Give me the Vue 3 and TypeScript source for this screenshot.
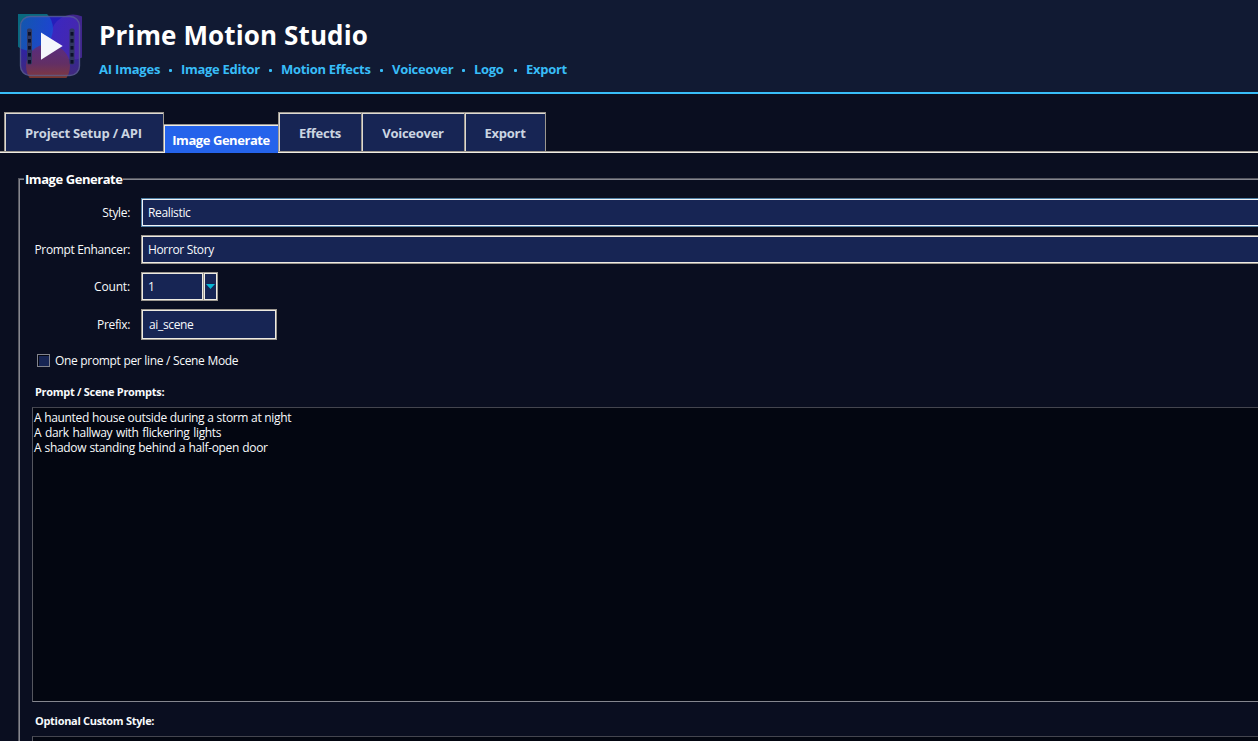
<script setup lang="ts">
import { ref } from 'vue'

const features: { label: string; cls: string }[] = [
  { label: 'AI Images', cls: 'f-images' },
  { label: 'Image Editor', cls: 'f-editor' },
  { label: 'Motion Effects', cls: 'f-motion' },
  { label: 'Voiceover', cls: 'f-voice' },
  { label: 'Logo', cls: 'f-logo' },
  { label: 'Export', cls: 'f-export' },
]
const tabs: { label: string; cls: string }[] = [
  { label: 'Project Setup / API', cls: 't-setup' },
  { label: 'Image Generate', cls: 't-image' },
  { label: 'Effects', cls: 't-effects' },
  { label: 'Voiceover', cls: 't-voice' },
  { label: 'Export', cls: 't-export' },
]
const active = ref('Image Generate')
const prompts: { text: string; cls: string }[] = [
  { text: 'A haunted house outside during a storm at night', cls: 'p1' },
  { text: 'A dark hallway with flickering lights', cls: 'p2' },
  { text: 'A shadow standing behind a half-open door', cls: 'p3' },
]
</script>

<template>
  <div class="app">
    <header class="header">
      <svg class="logo" width="64" height="64" viewBox="18 14 64 64">
        <defs>
          <linearGradient id="base" x1="0" y1="0" x2="0" y2="1">
            <stop offset="0" stop-color="#231cc0" />
            <stop offset="0.45" stop-color="#2a22ac" />
            <stop offset="1" stop-color="#432a78" />
          </linearGradient>
          <linearGradient id="cyan" x1="0" y1="0" x2="1" y2="0.3">
            <stop offset="0.1" stop-color="#0a6c9c" />
            <stop offset="1" stop-color="#1a4fd4" />
          </linearGradient>
          <linearGradient id="orange" x1="0" y1="0" x2="0" y2="1">
            <stop offset="0" stop-color="#5c2c7c" />
            <stop offset="0.45" stop-color="#673060" />
            <stop offset="0.8" stop-color="#8a3c34" />
          </linearGradient>
          <linearGradient id="violet" x1="0" y1="0" x2="1" y2="0.2">
            <stop offset="0" stop-color="#3c28c6" />
            <stop offset="1" stop-color="#5229a0" />
          </linearGradient>
          <clipPath id="card"><rect x="20" y="16" width="60" height="60" rx="10" /></clipPath>
          <clipPath id="frame"><rect x="18" y="14" width="64" height="64" /></clipPath>
        </defs>
        <g clip-path="url(#frame)">
          <circle cx="31" cy="29" r="22" fill="#08687f" />
          <circle cx="73" cy="37" r="22.500" fill="#40268c" />
          <circle cx="48" cy="66" r="22" fill="#78362e" />
        </g>
        <g clip-path="url(#card)">
          <rect x="18" y="14" width="64" height="64" fill="url(#base)" />
          <circle cx="73" cy="37" r="22.500" fill="url(#violet)" opacity="0.85" />
          <circle cx="31" cy="29" r="22" fill="url(#cyan)" opacity="0.8" />
          <circle cx="48" cy="66" r="22" fill="url(#orange)" opacity="0.9" />
        </g>
        <rect x="20.500" y="16.500" width="59" height="59" rx="9.500" fill="none" stroke="#59628d" stroke-opacity="0.75" stroke-width="1.400" />
        <rect x="27" y="28.500" width="5" height="36" rx="1.800" fill="#30385f" />
        <rect x="69.500" y="28.500" width="5" height="36" rx="1.800" fill="#30385f" />
        <g fill="#0b102a">
          <template v-for="n in 5" :key="n">
            <rect x="28" :y="25 + n * 7" width="3" height="3.600" />
            <rect x="70.500" :y="25 + n * 7" width="3" height="3.600" />
          </template>
        </g>
        <path d="M41 32.500 62.700 46 41 59.800z" fill="#f5f6fc" />
      </svg>
      <div class="brand">
        <h1><span>Prime Motion Studio</span></h1>
        <nav class="features">
          <span v-for="f in features" :key="f.label" class="feature" :class="f.cls">{{ f.label }}</span>
        </nav>
      </div>
    </header>

    <div class="tabs" role="tablist">
      <button
        v-for="t in tabs"
        :key="t.label"
        class="tab"
        :class="[t.cls, { active: active === t.label }]"
        role="tab"
        @click="active = t.label"
      ><span>{{ t.label }}</span></button>
    </div>

    <main class="panel">
      <div class="panel-head"><i class="lead"></i><b>Image Generate</b><i class="rule"></i></div>
      <div class="panel-body">
        <div class="row">
          <label><span>Style:</span></label>
          <div class="field wide focus"><span>Realistic</span></div>
        </div>
        <div class="row">
          <label><span>Prompt Enhancer:</span></label>
          <div class="field wide"><span>Horror Story</span></div>
        </div>
        <div class="row">
          <label><span class="count">Count:</span></label>
          <div class="field spin"><span>1</span></div>
          <div class="drop"><svg width="9" height="5" viewBox="0 0 9 5"><path d="M0 0h9L4.500 5z" fill="#06b6d4" /></svg></div>
        </div>
        <div class="row prefix">
          <label><span>Prefix:</span></label>
          <div class="field entry"><span>ai_scene</span></div>
        </div>
        <div class="check"><i class="box"></i><span>One prompt per line / Scene Mode</span></div>
        <div class="caption"><span>Prompt / Scene Prompts:</span></div>
        <div class="textarea">
          <div v-for="p in prompts" :key="p.cls" class="line"><span :class="p.cls">{{ p.text }}</span></div>
        </div>
        <div class="caption second"><span>Optional Custom Style:</span></div>
        <div class="textarea small"></div>
      </div>
    </main>
  </div>
</template>

<style>
body { background: #0a0e20; overflow: hidden; }
</style>

<style scoped>
.app {
  width: 1258px;
  height: 741px;
  overflow: hidden;
  background: #0a0e20;
  color: #f8fafc;
  font: 12px/16px "Open Sans", "Noto Sans", sans-serif;
  letter-spacing: -0.35px;
  white-space: nowrap;
}
.app * { box-sizing: border-box; }
.header {
  display: flex;
  height: 94px;
  padding: 14px 0 0 18px;
  background: #111a33;
  border-bottom: 2px solid #38bdf8;
}
.logo { flex: none; display: block; }
.brand { margin-left: 17px; }
h1 {
  margin: 3px 0 0;
  font-size: 26px;
  line-height: 36px;
  font-weight: 700;
  letter-spacing: 0.12px;
  color: #fff;
}
.features {
  display: flex;
  margin-top: 7px;
  font-size: 13px;
  line-height: 18px;
  font-weight: 700;
  letter-spacing: -0.29px;
  color: #38bdf8;
}
.feature { position: relative; flex: none; }
.feature + .feature::before {
  content: "";
  position: absolute;
  left: -12px;
  top: 9px;
  width: 3px;
  height: 3px;
  border-radius: 1px;
  background: #38bdf8;
}
.f-images { width: 82px; letter-spacing: -0.2px; }
.f-editor { width: 100px; }
.f-motion { width: 111px; }
.f-voice { width: 82px; }
.f-logo { width: 52px; }

.tabs {
  display: flex;
  align-items: flex-end;
  height: 59px;
  padding-left: 4px;
  background: linear-gradient(#9c978f, #9c978f) 0 57px / 100% 1px no-repeat,
    linear-gradient(#f0ece4, #f0ece4) 0 58px / 100% 1px no-repeat;
}
.tab {
  flex: none;
  height: 39px;
  margin: 0 0 2px;
  padding: 2px 0 0;
  border: 0;
  border-top: 1px solid #9c978f;
  border-left: 1px solid #9c978f;
  background: #172554;
  box-shadow: inset 1px 1px #dedad2;
  color: #cbd5e1;
  font: 700 13px/18px "Open Sans", "Noto Sans", sans-serif;
  letter-spacing: -0.27px;
  text-align: center;
}
.t-setup { width: 160px; padding-right: 1px; border-right: 1px solid #9c978f; letter-spacing: -0.18px; }
.t-image { width: 114px; }
.t-effects { width: 83px; }
.t-voice { width: 103px; }
.t-export { width: 82px; border-right: 1px solid #9c978f; }
.tab.active {
  height: 29px;
  margin: 0;
  padding: 2px 0 0;
  border-left: 0;
  background: #2563eb;
  box-shadow: inset 1px 1px #f0ece4;
  letter-spacing: -0.44px;
  color: #fff;
}

.panel {
  margin: 19px 0 0 18px;
  height: 569px;
}
.panel-head {
  display: flex;
  height: 16px;
  align-items: flex-start;
}
.panel-head b {
  flex: none;
  width: 99px;
  height: 18px;
  margin-top: -2px;
  padding-left: 1px;
  font-size: 13px;
  line-height: 18px;
  font-weight: 700;
  letter-spacing: -0.44px;
  color: #fff;
}
.lead {
  width: 6px;
  height: 10px;
  margin-top: 6px;
  border-top: 1px solid #55565f;
  border-left: 1px solid #55565f;
  box-shadow: inset 1px 1px #85868f;
}
.rule {
  flex: 1;
  height: 2px;
  margin-top: 6px;
  background: #85868f;
  border-top: 1px solid #55565f;
}
.panel-body {
  height: 560px;
  padding: 10px 0 0 12px;
  border-left: 1px solid #55565f;
  box-shadow: inset 1px 0 #85868f;
}
.row {
  display: flex;
  align-items: center;
  height: 29px;
  margin-bottom: 8px;
}
.row label {
  flex: none;
  width: 99px;
  text-align: right;
}
.count { letter-spacing: -0.15px; }
.field {
  flex: none;
  display: flex;
  align-items: center;
  height: 29px;
  margin-left: 11px;
  padding-left: 5px;
  border: 1px solid #9c978f;
  box-shadow: inset 0 0 0 1px #eeebe3;
  background: #172554;
  color: #f8fafc;
}
.field span { margin-left: 1px; }
.wide { flex: 1; border-right: 0; box-shadow: inset 1px 1px #eeebe3, inset 0 -1px #eeebe3; }
.focus { border-color: #4f7fa5; box-shadow: inset 1px 1px #f0f4f8, inset 0 -1px #f0f4f8; }
.spin { width: 63px; }
.drop {
  display: flex;
  align-items: center;
  justify-content: center;
  width: 14px;
  height: 29px;
  background: #172554;
  border: 1px solid #9c978f;
  border-left: 0;
  box-shadow: inset 0 0 0 1px #eeebe3;
}
.row.prefix { height: 31px; margin: 0; }
.entry { width: 136px; height: 31px; padding-left: 6px; }
.check {
  display: flex;
  align-items: center;
  height: 16px;
  margin: 13px 0 0 6px;
  word-spacing: 0.2px;
}
.box {
  width: 13px;
  height: 13px;
  margin: 0 5px 1px 0;
  background: #172554;
  border: 1px solid #82838c;
  box-shadow: inset 1px 1px #050711;
}
.caption {
  height: 16px;
  margin: 15px 0 0 4px;
  font-size: 11px;
  font-weight: 700;
  letter-spacing: -0.3px;
}
.textarea {
  height: 295px;
  margin: 7px 0 0 1px;
  padding: 2px 0 0 1px;
  border-left: 1px solid #55565f;
  border-top: 1px solid #44454f;
  border-bottom: 1px solid #85868f;
  background: #030611;
}
.line { height: 15px; line-height: 15px; }
.p1 { word-spacing: 0.25px; }
.p2 { word-spacing: 1px; }
.p3 { word-spacing: 0.6px; }
.caption.second { margin-top: 11px; }
.textarea.small { height: 40px; margin-top: 7px; }
</style>
